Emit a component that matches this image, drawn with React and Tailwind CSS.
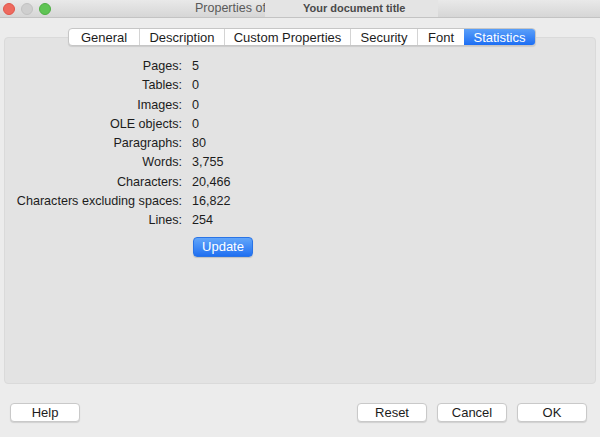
import React from 'react';

const stats = [
    ['Pages:', '5'],
    ['Tables:', '0'],
    ['Images:', '0'],
    ['OLE objects:', '0'],
    ['Paragraphs:', '80'],
    ['Words:', '3,755'],
    ['Characters:', '20,466'],
    ['Characters excluding spaces:', '16,822'],
    ['Lines:', '254'],
];

const tabs = [
    { label: 'General', w: 'w-[70px]' },
    { label: 'Description', w: 'w-[85px]' },
    { label: 'Custom Properties', w: 'w-[126px]' },
    { label: 'Security', w: 'w-[67px]' },
    { label: 'Font', w: 'w-[47px]' },
    { label: 'Statistics', w: 'w-[71px]', active: true },
];

function PlainButton({ children }) {
    return (
        <button className="w-[70px] h-[19px] rounded-[4px] bg-white border border-[#c9c9c9] shadow-[0_1px_1px_rgba(0,0,0,0.12)] text-[13px] leading-none text-[#1c1c1c]">
            {children}
        </button>
    );
}

export default function App() {
    return (
        <div className="w-[600px] h-[437px] bg-[#ececec] flex flex-col overflow-hidden text-[#1c1c1c]" style={{ fontFamily: '"Liberation Sans", Arial, sans-serif' }}>
            {/* title bar */}
            <div className="h-[18px] flex items-center bg-gradient-to-b from-[#e9e9e9] to-[#d6d6d6] border-b border-[#c3c3c3] shrink-0">
                <div className="flex items-center gap-[6px] pl-[3px] w-[195px] shrink-0">
                    <span className="w-[12px] h-[12px] rounded-full bg-[#ee6a5f] border border-[#e0554a]" />
                    <span className="w-[12px] h-[12px] rounded-full bg-[#cfcfcf] border border-[#c2c2c2]" />
                    <span className="w-[12px] h-[12px] rounded-full bg-[#5fc454] border border-[#4eae44]" />
                </div>
                <span className="text-[12.5px] text-[#5a5a5a] leading-none w-[70px] shrink-0 whitespace-nowrap">Properties of</span>
                <div className="h-full w-[173px] shrink-0 bg-[#e4e4e4] flex items-center pl-[38px]">
                    <span className="text-[11px] font-bold text-[#4a4a4a] leading-none whitespace-nowrap">Your document title</span>
                </div>
            </div>

            {/* tabs */}
            <div className="relative z-10 mt-[10px] ml-[68px] flex h-[18px] shrink-0">
                <div className="flex rounded-[4px] bg-white border border-[#c6c6c6] shadow-[0_1px_1px_rgba(0,0,0,0.1)] overflow-hidden">
                    {tabs.map((t, i) => (
                        <div key={t.label}
                            className={`${t.w} flex items-center justify-center text-[13px] leading-none ${t.active ? 'bg-gradient-to-b from-[#5a9ff9] to-[#1c6ef3] text-white' : ''} ${i > 0 && !t.active ? 'border-l border-[#d4d4d4]' : ''}`}>
                            {t.label}
                        </div>
                    ))}
                </div>
            </div>

            {/* panel */}
            <div className="-mt-[9px] mx-[4px] h-[347px] rounded-[4px] bg-[#e3e3e3] border border-[#dadada] pt-[19px] shrink-0">
                <div className="flex flex-col">
                    {stats.map(([label, value]) => (
                        <div key={label} className="flex h-[19.25px] items-center text-[12.6px]">
                            <span className="w-[177px] text-right">{label}</span>
                            <span className="ml-[10px]">{value}</span>
                        </div>
                    ))}
                </div>
                <div className="ml-[188px] mt-[4px]">
                    <button className="w-[60px] h-[20px] rounded-[4px] bg-gradient-to-b from-[#62a6fa] to-[#1f6ff1] border border-[#2a74e6] shadow-[0_1px_1px_rgba(0,0,0,0.15)] text-white text-[13px] leading-none">
                        Update
                    </button>
                </div>
            </div>

            {/* bottom buttons */}
            <div className="flex items-center mt-[19px] pl-[10px] pr-[13px]">
                <PlainButton>Help</PlainButton>
                <div className="flex-1" />
                <div className="flex gap-[10px]">
                    <PlainButton>Reset</PlainButton>
                    <PlainButton>Cancel</PlainButton>
                    <PlainButton>OK</PlainButton>
                </div>
            </div>
        </div>
    );
}
